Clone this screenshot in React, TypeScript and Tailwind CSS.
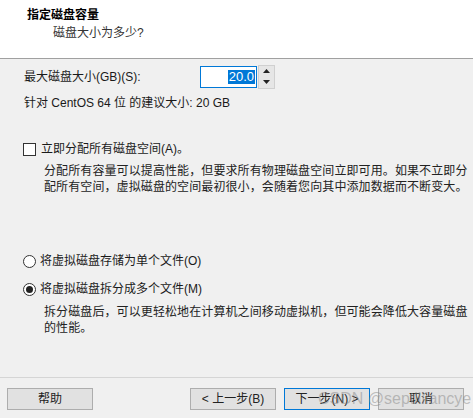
const font = "font-['Segoe_UI','Liberation_Sans','Noto_Sans_CJK_SC',sans-serif]";

function Btn({ children, primary }: { children: React.ReactNode; primary?: boolean }) {
  return (
    <div
      className={`w-[86px] h-[22px] flex items-center justify-center text-[12px] text-[#222] bg-[#e1e1e1] border ${
        primary ? "border-[#0078d7]" : "border-[#adadad]"
      }`}
    >
      {children}
    </div>
  );
}

export default function App() {
  return (
    <div className={`relative w-[473px] h-[418px] bg-[#f0f0f0] text-[12px] text-[#1a1a1a] ${font}`}>
      {/* header */}
      <div className="h-[59px] bg-white border-b border-[#a0a0a0] pt-[6px]">
        <div className="pl-[27px] font-bold leading-[18px] text-black">指定磁盘容量</div>
        <div className="pl-[53px] leading-[18px] text-[#333]">磁盘大小为多少?</div>
      </div>

      {/* size */}
      <div className="flex items-center pl-[24px] mt-[5px] h-[25px]">
        <span className="w-[176px] whitespace-nowrap">最大磁盘大小(GB)(S):</span>
        <div className="flex items-center">
          <div className="w-[57px] h-[22px] bg-white border border-[#0078d7] flex items-center justify-end pr-[1px]">
            <span className="bg-[#0078d7] text-white leading-[14px] text-[13px] px-[1px]">20.0</span>
          </div>
          <div className="w-[17px] h-[24px] ml-[1px] bg-[#e6e6e6] border border-[#d0d0d0] flex flex-col">
            <div className="flex-1 flex items-center justify-center">
              <svg width="7" height="4" viewBox="0 0 7 4"><path d="M3.5 0L7 4H0z" fill="#222" /></svg>
            </div>
            <div className="flex-1 flex items-center justify-center">
              <svg width="7" height="4" viewBox="0 0 7 4"><path d="M0 0h7L3.5 4z" fill="#222" /></svg>
            </div>
          </div>
        </div>
      </div>
      <div className="pl-[24px] mt-[6px] leading-[16px]">针对 CentOS 64 位 的建议大小: 20 GB</div>

      {/* allocate */}
      <div className="flex items-center pl-[23px] mt-[30px] h-[16px]">
        <div className="w-[13px] h-[13px] bg-white border border-[#333]" />
        <span className="ml-[5px]">立即分配所有磁盘空间(A)。</span>
      </div>
      <div className="pl-[44px] mt-[6px] leading-[16px] whitespace-nowrap tracking-[0.1px] text-[#222]">
        分配所有容量可以提高性能，但要求所有物理磁盘空间立即可用。如果不立即分
        <br />
        配所有空间，虚拟磁盘的空间最初很小，会随着您向其中添加数据而不断变大。
      </div>

      {/* split */}
      <div className="flex items-center pl-[23px] mt-[58px] h-[16px]">
        <div className="w-[13px] h-[13px] rounded-full bg-white border border-[#333]" />
        <span className="ml-[4px]">将虚拟磁盘存储为单个文件(O)</span>
      </div>
      <div className="flex items-center pl-[23px] mt-[12px] h-[16px]">
        <div className="w-[13px] h-[13px] rounded-full bg-white border border-[#333] flex items-center justify-center">
          <div className="w-[7px] h-[7px] rounded-full bg-[#222]" />
        </div>
        <span className="ml-[4px]">将虚拟磁盘拆分成多个文件(M)</span>
      </div>
      <div className="pl-[44px] mt-[7px] leading-[16px] whitespace-nowrap tracking-[0.1px] text-[#222]">
        拆分磁盘后，可以更轻松地在计算机之间移动虚拟机，但可能会降低大容量磁盘
        <br />
        的性能。
      </div>

      {/* footer */}
      <div className="absolute left-0 right-0 top-[377px] border-t border-[#d5d5d5]">
        <div className="flex items-center px-[7px] pt-[10px]">
          <Btn>帮助</Btn>
          <div className="flex-1" />
          <div className="flex gap-[8px] pr-[2px]">
            <Btn>&lt; 上一步(B)</Btn>
            <Btn primary>下一步(N) &gt;</Btn>
            <Btn>取消</Btn>
          </div>
        </div>
      </div>
      <span className="absolute left-[318px] top-[388px] text-[16px] leading-[22px] text-[#888]/50 whitespace-nowrap pointer-events-none">
        CSDN @septilliancye
      </span>
    </div>
  );
}
